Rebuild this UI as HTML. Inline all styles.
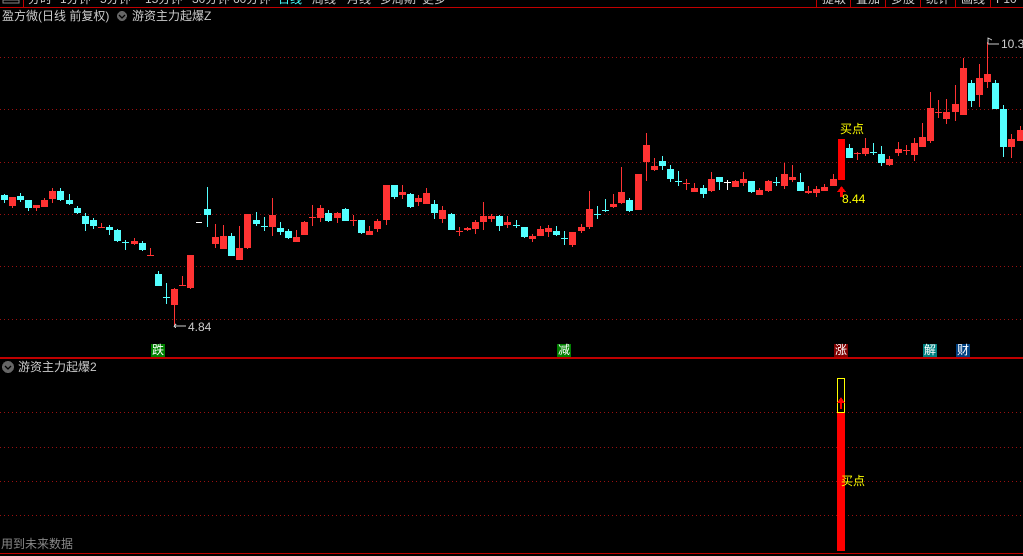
<!DOCTYPE html>
<html><head><meta charset="utf-8"><style>
body{margin:0;background:#000;width:1023px;height:556px;overflow:hidden;position:relative;font-family:"Liberation Sans","Noto Sans CJK SC",sans-serif;}
.t{position:absolute;white-space:nowrap;font-size:12px;line-height:13px;}
.tb{position:absolute;top:-7px;white-space:nowrap;font-size:12px;line-height:13px;color:#ccc;}
.lbl{position:absolute;top:344px;width:14px;height:13px;font-size:12px;line-height:13px;color:#fff;text-align:center;}
</style></head><body>
<svg width="1023" height="556" style="position:absolute;left:0;top:0" shape-rendering="crispEdges">
<g stroke="#9a1010" stroke-width="1" stroke-dasharray="1 3">
<line x1="0" x2="1023" y1="57.5" y2="57.5"/><line x1="0" x2="1023" y1="109.5" y2="109.5"/><line x1="0" x2="1023" y1="162.5" y2="162.5"/><line x1="0" x2="1023" y1="214.5" y2="214.5"/><line x1="0" x2="1023" y1="266.5" y2="266.5"/><line x1="0" x2="1023" y1="319.5" y2="319.5"/>
<line x1="0" x2="1023" y1="412.5" y2="412.5"/><line x1="0" x2="1023" y1="447.5" y2="447.5"/><line x1="0" x2="1023" y1="481.5" y2="481.5"/><line x1="0" x2="1023" y1="515.5" y2="515.5"/>
</g>
<rect x="0" y="7" width="1023" height="1" fill="#c00000"/>
<rect x="0" y="357" width="1023" height="2" fill="#c00000"/>
<rect x="0" y="553" width="1023" height="1" fill="#c00000"/>
<rect x="23" y="0" width="1" height="7" fill="#c00000"/>
<g fill="#c00000"><rect x="816" y="0" width="1" height="7"/><rect x="850" y="0" width="1" height="7"/><rect x="885" y="0" width="1" height="7"/><rect x="920" y="0" width="1" height="7"/><rect x="955" y="0" width="1" height="7"/><rect x="990" y="0" width="1" height="7"/></g>
<rect x="3" y="0" width="16" height="3" fill="none" stroke="#888"/>
<g fill="#54ffff">
<rect x="4" y="194" width="1" height="9"/><rect x="1" y="195" width="7" height="5"/>
<rect x="20" y="193" width="1" height="9"/><rect x="17" y="196" width="7" height="4"/>
<rect x="28" y="200" width="1" height="11"/><rect x="25" y="200" width="7" height="8"/>
<rect x="60" y="188" width="1" height="13"/><rect x="57" y="191" width="7" height="9"/>
<rect x="69" y="194" width="1" height="11"/><rect x="66" y="200" width="7" height="4"/>
<rect x="77" y="206" width="1" height="8"/><rect x="74" y="208" width="7" height="5"/>
<rect x="85" y="213" width="1" height="18"/><rect x="82" y="216" width="7" height="8"/>
<rect x="93" y="218" width="1" height="11"/><rect x="90" y="220" width="7" height="6"/>
<rect x="109" y="225" width="1" height="10"/><rect x="106" y="227" width="7" height="3"/>
<rect x="117" y="229" width="1" height="13"/><rect x="114" y="230" width="7" height="11"/>
<rect x="125" y="240" width="1" height="10"/><rect x="122" y="242" width="7" height="1"/>
<rect x="142" y="241" width="1" height="10"/><rect x="139" y="243" width="7" height="7"/>
<rect x="158" y="271" width="1" height="15"/><rect x="155" y="274" width="7" height="12"/>
<rect x="166" y="283" width="1" height="21"/><rect x="163" y="297" width="7" height="1"/>
<rect x="207" y="187" width="1" height="40"/><rect x="204" y="209" width="7" height="6"/>
<rect x="231" y="233" width="1" height="23"/><rect x="228" y="236" width="7" height="20"/>
<rect x="256" y="212" width="1" height="14"/><rect x="253" y="220" width="7" height="4"/>
<rect x="264" y="217" width="1" height="14"/><rect x="261" y="226" width="7" height="1"/>
<rect x="280" y="222" width="1" height="13"/><rect x="277" y="228" width="7" height="4"/>
<rect x="288" y="229" width="1" height="10"/><rect x="285" y="231" width="7" height="7"/>
<rect x="328" y="210" width="1" height="12"/><rect x="325" y="213" width="7" height="8"/>
<rect x="345" y="208" width="1" height="13"/><rect x="342" y="209" width="7" height="12"/>
<rect x="361" y="220" width="1" height="14"/><rect x="358" y="220" width="7" height="13"/>
<rect x="394" y="185" width="1" height="14"/><rect x="391" y="185" width="7" height="12"/>
<rect x="410" y="193" width="1" height="15"/><rect x="407" y="194" width="7" height="13"/>
<rect x="434" y="200" width="1" height="19"/><rect x="431" y="204" width="7" height="9"/>
<rect x="451" y="213" width="1" height="17"/><rect x="448" y="214" width="7" height="16"/>
<rect x="499" y="215" width="1" height="16"/><rect x="496" y="216" width="7" height="10"/>
<rect x="516" y="220" width="1" height="8"/><rect x="513" y="225" width="7" height="1"/>
<rect x="524" y="227" width="1" height="11"/><rect x="521" y="227" width="7" height="10"/>
<rect x="556" y="226" width="1" height="10"/><rect x="553" y="231" width="7" height="4"/>
<rect x="564" y="231" width="1" height="14"/><rect x="561" y="238" width="7" height="1"/>
<rect x="597" y="206" width="1" height="13"/><rect x="594" y="214" width="7" height="1"/>
<rect x="605" y="199" width="1" height="13"/><rect x="602" y="210" width="7" height="1"/>
<rect x="629" y="198" width="1" height="14"/><rect x="626" y="200" width="7" height="11"/>
<rect x="662" y="156" width="1" height="14"/><rect x="659" y="161" width="7" height="5"/>
<rect x="670" y="165" width="1" height="17"/><rect x="667" y="169" width="7" height="10"/>
<rect x="678" y="171" width="1" height="15"/><rect x="675" y="181" width="7" height="1"/>
<rect x="703" y="185" width="1" height="13"/><rect x="700" y="188" width="7" height="6"/>
<rect x="719" y="177" width="1" height="13"/><rect x="716" y="177" width="7" height="5"/>
<rect x="751" y="181" width="1" height="12"/><rect x="748" y="181" width="7" height="11"/>
<rect x="776" y="177" width="1" height="9"/><rect x="773" y="182" width="7" height="1"/>
<rect x="800" y="173" width="1" height="18"/><rect x="797" y="182" width="7" height="9"/>
<rect x="849" y="144" width="1" height="14"/><rect x="846" y="148" width="7" height="10"/>
<rect x="873" y="143" width="1" height="12"/><rect x="870" y="152" width="7" height="1"/>
<rect x="881" y="146" width="1" height="20"/><rect x="878" y="154" width="7" height="9"/>
<rect x="971" y="80" width="1" height="27"/><rect x="968" y="83" width="7" height="18"/>
<rect x="995" y="80" width="1" height="29"/><rect x="992" y="83" width="7" height="26"/>
<rect x="1003" y="105" width="1" height="52"/><rect x="1000" y="109" width="7" height="38"/>
</g>
<g fill="#ff3333">
<rect x="12" y="197" width="1" height="11"/><rect x="9" y="197" width="7" height="9"/>
<rect x="36" y="205" width="1" height="6"/><rect x="33" y="205" width="7" height="3"/>
<rect x="44" y="198" width="1" height="9"/><rect x="41" y="200" width="7" height="7"/>
<rect x="52" y="188" width="1" height="15"/><rect x="49" y="191" width="7" height="8"/>
<rect x="101" y="223" width="1" height="5"/><rect x="98" y="227" width="7" height="1"/>
<rect x="134" y="238" width="1" height="7"/><rect x="131" y="241" width="7" height="3"/>
<rect x="150" y="248" width="1" height="8"/><rect x="147" y="255" width="7" height="1"/>
<rect x="174" y="288" width="1" height="39"/><rect x="171" y="289" width="7" height="16"/>
<rect x="182" y="276" width="1" height="10"/><rect x="179" y="285" width="7" height="1"/>
<rect x="190" y="255" width="1" height="34"/><rect x="187" y="255" width="7" height="33"/>
<rect x="215" y="224" width="1" height="24"/><rect x="212" y="237" width="7" height="7"/>
<rect x="223" y="225" width="1" height="24"/><rect x="220" y="236" width="7" height="13"/>
<rect x="239" y="226" width="1" height="34"/><rect x="236" y="248" width="7" height="12"/>
<rect x="247" y="214" width="1" height="35"/><rect x="244" y="214" width="7" height="34"/>
<rect x="272" y="198" width="1" height="38"/><rect x="269" y="215" width="7" height="12"/>
<rect x="296" y="230" width="1" height="12"/><rect x="293" y="237" width="7" height="5"/>
<rect x="304" y="221" width="1" height="14"/><rect x="301" y="222" width="7" height="13"/>
<rect x="312" y="205" width="1" height="21"/><rect x="309" y="217" width="7" height="1"/>
<rect x="320" y="205" width="1" height="17"/><rect x="317" y="208" width="7" height="10"/>
<rect x="337" y="212" width="1" height="11"/><rect x="334" y="213" width="7" height="5"/>
<rect x="353" y="215" width="1" height="11"/><rect x="350" y="220" width="7" height="1"/>
<rect x="369" y="226" width="1" height="9"/><rect x="366" y="231" width="7" height="4"/>
<rect x="377" y="219" width="1" height="13"/><rect x="374" y="221" width="7" height="8"/>
<rect x="386" y="185" width="1" height="40"/><rect x="383" y="185" width="7" height="35"/>
<rect x="402" y="185" width="1" height="14"/><rect x="399" y="192" width="7" height="3"/>
<rect x="418" y="195" width="1" height="11"/><rect x="415" y="198" width="7" height="4"/>
<rect x="426" y="188" width="1" height="16"/><rect x="423" y="193" width="7" height="11"/>
<rect x="442" y="206" width="1" height="17"/><rect x="439" y="210" width="7" height="9"/>
<rect x="459" y="227" width="1" height="9"/><rect x="456" y="231" width="7" height="1"/>
<rect x="467" y="227" width="1" height="4"/><rect x="464" y="228" width="7" height="2"/>
<rect x="475" y="220" width="1" height="14"/><rect x="472" y="222" width="7" height="7"/>
<rect x="483" y="202" width="1" height="28"/><rect x="480" y="216" width="7" height="6"/>
<rect x="491" y="214" width="1" height="8"/><rect x="488" y="216" width="7" height="3"/>
<rect x="507" y="216" width="1" height="12"/><rect x="504" y="222" width="7" height="3"/>
<rect x="532" y="234" width="1" height="8"/><rect x="529" y="236" width="7" height="3"/>
<rect x="540" y="226" width="1" height="10"/><rect x="537" y="229" width="7" height="7"/>
<rect x="548" y="225" width="1" height="12"/><rect x="545" y="228" width="7" height="4"/>
<rect x="572" y="232" width="1" height="15"/><rect x="569" y="232" width="7" height="13"/>
<rect x="581" y="224" width="1" height="9"/><rect x="578" y="227" width="7" height="4"/>
<rect x="589" y="191" width="1" height="38"/><rect x="586" y="209" width="7" height="18"/>
<rect x="613" y="194" width="1" height="14"/><rect x="610" y="204" width="7" height="3"/>
<rect x="621" y="167" width="1" height="37"/><rect x="618" y="192" width="7" height="11"/>
<rect x="638" y="174" width="1" height="36"/><rect x="635" y="174" width="7" height="36"/>
<rect x="646" y="133" width="1" height="48"/><rect x="643" y="145" width="7" height="17"/>
<rect x="654" y="158" width="1" height="13"/><rect x="651" y="166" width="7" height="4"/>
<rect x="686" y="179" width="1" height="11"/><rect x="683" y="183" width="7" height="1"/>
<rect x="694" y="183" width="1" height="9"/><rect x="691" y="188" width="7" height="4"/>
<rect x="711" y="172" width="1" height="20"/><rect x="708" y="179" width="7" height="12"/>
<rect x="735" y="180" width="1" height="7"/><rect x="732" y="181" width="7" height="6"/>
<rect x="743" y="172" width="1" height="14"/><rect x="740" y="179" width="7" height="4"/>
<rect x="759" y="188" width="1" height="7"/><rect x="756" y="190" width="7" height="5"/>
<rect x="768" y="180" width="1" height="12"/><rect x="765" y="181" width="7" height="10"/>
<rect x="784" y="163" width="1" height="26"/><rect x="781" y="174" width="7" height="12"/>
<rect x="792" y="165" width="1" height="17"/><rect x="789" y="177" width="7" height="3"/>
<rect x="808" y="186" width="1" height="8"/><rect x="805" y="191" width="7" height="2"/>
<rect x="816" y="186" width="1" height="11"/><rect x="813" y="189" width="7" height="4"/>
<rect x="824" y="184" width="1" height="7"/><rect x="821" y="187" width="7" height="4"/>
<rect x="833" y="174" width="1" height="12"/><rect x="830" y="179" width="7" height="7"/>
<rect x="857" y="152" width="1" height="8"/><rect x="854" y="153" width="7" height="1"/>
<rect x="865" y="138" width="1" height="18"/><rect x="862" y="148" width="7" height="6"/>
<rect x="889" y="156" width="1" height="10"/><rect x="886" y="159" width="7" height="6"/>
<rect x="898" y="142" width="1" height="14"/><rect x="895" y="149" width="7" height="4"/>
<rect x="906" y="145" width="1" height="10"/><rect x="903" y="150" width="7" height="1"/>
<rect x="914" y="138" width="1" height="23"/><rect x="911" y="143" width="7" height="12"/>
<rect x="922" y="123" width="1" height="24"/><rect x="919" y="137" width="7" height="10"/>
<rect x="930" y="92" width="1" height="51"/><rect x="927" y="108" width="7" height="33"/>
<rect x="938" y="100" width="1" height="18"/><rect x="935" y="112" width="7" height="1"/>
<rect x="946" y="99" width="1" height="25"/><rect x="943" y="112" width="7" height="7"/>
<rect x="955" y="85" width="1" height="36"/><rect x="952" y="104" width="7" height="8"/>
<rect x="963" y="58" width="1" height="57"/><rect x="960" y="68" width="7" height="47"/>
<rect x="979" y="64" width="1" height="43"/><rect x="976" y="78" width="7" height="17"/>
<rect x="987" y="42" width="1" height="46"/><rect x="984" y="74" width="7" height="8"/>
<rect x="1011" y="134" width="1" height="24"/><rect x="1008" y="139" width="7" height="8"/>
<rect x="1020" y="126" width="1" height="15"/><rect x="1017" y="130" width="6" height="11"/>
</g>
<g fill="#fff"><rect x="196" y="222" width="6" height="1"/><rect x="727" y="180" width="1" height="10"/><rect x="724" y="182" width="7" height="1"/></g>
<rect x="838" y="139" width="7" height="41" fill="#ff0000"/>
<path d="M841.5 186 L837 192 L840 192 L840 197 L843 197 L843 192 L846 192 Z" fill="#ff0000"/>
<path d="M174 326 L176 324 M174 326 L176 328 M174 326 L186 326" stroke="#ccc" fill="none"/>
<path d="M988 44 L988 38 L992 40 M988 44 L999 44" stroke="#ccc" fill="none"/>
<rect x="837" y="412" width="8" height="139" fill="#ff0000"/>
<rect x="837.5" y="378.5" width="7" height="34" fill="none" stroke="#ffff00"/>
<path d="M841 397 L837 403 L840 403 L840 409 L842 409 L842 403 L845 403 Z" fill="#ff0000"/>
<circle cx="122" cy="16" r="5" fill="#666"/><path d="M119 15 L122 18 L125 15" stroke="#000" stroke-width="1.3" fill="none" shape-rendering="auto"/>
<circle cx="8" cy="367" r="6" fill="#666"/><path d="M5 366 L8 369 L11 366" stroke="#000" stroke-width="1.3" fill="none" shape-rendering="auto"/>
</svg>
<div class="tb" style="left:28px">分时</div>
<div class="tb" style="left:60px">1分钟</div>
<div class="tb" style="left:100px">5分钟</div>
<div class="tb" style="left:145px">15分钟</div>
<div class="tb" style="left:192px">30分钟</div>
<div class="tb" style="left:233px">60分钟</div>
<div class="tb" style="left:278px;color:#4ff">日线</div>
<div class="tb" style="left:312px">周线</div>
<div class="tb" style="left:347px">月线</div>
<div class="tb" style="left:380px">多周期</div>
<div class="tb" style="left:422px">更多</div>
<div class="tb" style="left:822px">提取</div>
<div class="tb" style="left:856px">叠加</div>
<div class="tb" style="left:891px">多股</div>
<div class="tb" style="left:926px">统计</div>
<div class="tb" style="left:961px">画线</div>
<div class="tb" style="left:996px">F10</div>
<div class="t" style="left:2px;top:10px;color:#ccc;">盈方微(日线 前复权)</div>
<div class="t" style="left:132px;top:10px;color:#ccc;">游资主力起爆Z</div>
<div class="t" style="left:1001px;top:38px;color:#ccc;">10.3</div>
<div class="t" style="left:840px;top:123px;color:#ff0;">买点</div>
<div class="t" style="left:842px;top:193px;color:#ff0;">8.44</div>
<div class="t" style="left:188px;top:321px;color:#ccc;">4.84</div>
<div class="lbl" style="left:151px;background:#008000;">跌</div>
<div class="lbl" style="left:557px;background:#008000;">减</div>
<div class="lbl" style="left:834px;background:#800000;">涨</div>
<div class="lbl" style="left:923px;background:#008080;">解</div>
<div class="lbl" style="left:956px;background:#004080;">财</div>
<div class="t" style="left:18px;top:361px;color:#ccc;">游资主力起爆2</div>
<div class="t" style="left:841px;top:475px;color:#ff0;">买点</div>
<div class="t" style="left:1px;top:538px;color:#888;">用到未来数据</div>
</body></html>
